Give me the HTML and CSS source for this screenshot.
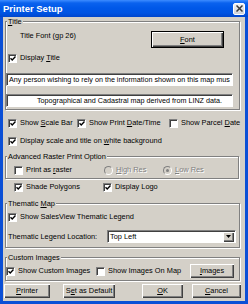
FILE: index.html
```html
<!DOCTYPE html>
<html>
<head>
<meta charset="utf-8">
<link rel="stylesheet" href="styles.css">
</head>
<body>
<div class="window">
  <div class="titlebar">
    <span class="title">Printer Setup</span>
    <span class="close"><svg width="7" height="7" viewBox="0 0 7 7"><path d="M0.5 0.5 L6.5 6.5 M6.5 0.5 L0.5 6.5" stroke="#3a3a3a" stroke-width="1.5"/></svg></span>
  </div>
  <div class="client">
    <fieldset class="group g-title">
      <legend><u>T</u>itle</legend>
      <div class="font-row">
        <span class="font-label">Title Font (gp 26)</span>
        <button class="btn btn-default btn-font"><span><u>F</u>ont</span></button>
      </div>
      <label class="chk display-title"><span class="box"><svg width="7" height="7" viewBox="0 0 7 7"><path d="M0.6 3.2 L2.6 5.2 L6.4 1.2" fill="none" stroke="#000" stroke-width="1.6"/></svg></span><span>Display <u>T</u>itle</span></label>
      <div class="field field1">Any person wishing to rely on the information shown on this map mus</div>
      <div class="field field2">Topographical and Cadastral map derived from LINZ data.</div>
    </fieldset>

    <div class="opt-row opt-row1">
      <label class="chk"><span class="box"><svg width="7" height="7" viewBox="0 0 7 7"><path d="M0.6 3.2 L2.6 5.2 L6.4 1.2" fill="none" stroke="#000" stroke-width="1.6"/></svg></span><span>Show <u>S</u>cale Bar</span></label>
      <label class="chk"><span class="box"><svg width="7" height="7" viewBox="0 0 7 7"><path d="M0.6 3.2 L2.6 5.2 L6.4 1.2" fill="none" stroke="#000" stroke-width="1.6"/></svg></span><span>Show Print <u>D</u>ate/Time</span></label>
      <label class="chk"><span class="box"></span><span>Show Parcel <u>D</u>ate</span></label>
    </div>
    <div class="opt-row opt-row2">
      <label class="chk"><span class="box"><svg width="7" height="7" viewBox="0 0 7 7"><path d="M0.6 3.2 L2.6 5.2 L6.4 1.2" fill="none" stroke="#000" stroke-width="1.6"/></svg></span><span>Display scale and title on <u>w</u>hite background</span></label>
    </div>

    <fieldset class="group g-adv">
      <legend>Advanced Raster Print Option</legend>
      <div class="adv-row">
        <label class="chk"><span class="box"></span><span>Print as <u>r</u>aster</span></label>
        <label class="radio disabled"><span class="dot"></span><span><u>H</u>igh Res</span></label>
        <label class="radio disabled"><span class="dot on"></span><span><u>L</u>ow Res</span></label>
      </div>
    </fieldset>

    <div class="opt-row shade-row">
      <label class="chk"><span class="box"><svg width="7" height="7" viewBox="0 0 7 7"><path d="M0.6 3.2 L2.6 5.2 L6.4 1.2" fill="none" stroke="#000" stroke-width="1.6"/></svg></span><span>Shade Polygons</span></label>
      <label class="chk"><span class="box"><svg width="7" height="7" viewBox="0 0 7 7"><path d="M0.6 3.2 L2.6 5.2 L6.4 1.2" fill="none" stroke="#000" stroke-width="1.6"/></svg></span><span>Display Logo</span></label>
    </div>

    <fieldset class="group g-them">
      <legend>Thematic <u>M</u>ap</legend>
      <label class="chk salesview"><span class="box"><svg width="7" height="7" viewBox="0 0 7 7"><path d="M0.6 3.2 L2.6 5.2 L6.4 1.2" fill="none" stroke="#000" stroke-width="1.6"/></svg></span><span>Show SalesView Thematic Legend</span></label>
      <div class="loc-row">
        <span class="loc-label">Thematic Legend Location:</span>
        <div class="combo">
          <span class="combo-text">Top Left</span>
          <span class="combo-btn"><svg width="5" height="3" viewBox="0 0 5 3"><path d="M0 0 H5 L2.5 3 Z" fill="#000"/></svg></span>
        </div>
      </div>
    </fieldset>

    <fieldset class="group g-custom">
      <legend>Custom Images</legend>
      <div class="custom-row">
        <label class="chk"><span class="box"><svg width="7" height="7" viewBox="0 0 7 7"><path d="M0.6 3.2 L2.6 5.2 L6.4 1.2" fill="none" stroke="#000" stroke-width="1.6"/></svg></span><span>Show Custom Images</span></label>
        <label class="chk"><span class="box"></span><span>Show Images On Map</span></label>
        <button class="btn btn-images"><span><u>I</u>mages</span></button>
      </div>
    </fieldset>

    <div class="bottom-row">
      <button class="btn btn-printer"><span><u>P</u>rinter</span></button>
      <button class="btn btn-setdef"><span>S<u>e</u>t as Default</span></button>
      <button class="btn btn-ok"><span><u>O</u>K</span></button>
      <button class="btn btn-cancel"><span><u>C</u>ancel</span></button>
    </div>
  </div>
</div>
</body>
</html>
```

FILE: styles.css
```css
* { box-sizing: border-box; }
html, body { margin: 0; padding: 0; }
body {
  width: 248px;
  height: 304px;
  overflow: hidden;
  background: #0b4fd6;
  font-family: "Liberation Sans", Arial, sans-serif;
  font-size: 7.4px;
  color: #000;
}
u { text-decoration: underline; text-underline-offset: 1px; }

.window {
  width: 248px;
  height: 304px;
  display: flex;
  flex-direction: column;
  background: #0b4fd6;
}

.titlebar {
  height: 17px;
  flex: none;
  display: flex;
  align-items: center;
  justify-content: space-between;
  padding: 0 3px 0 3px;
  background: linear-gradient(to bottom, #3d8cff 0, #0a62ee 3px, #0058e8 8px, #0054e3 13px, #0046cc 17px);
}
.title {
  color: #fff;
  font-weight: bold;
  font-size: 9.5px;
  line-height: 11px;
}
.close {
  width: 12px;
  height: 12px;
  border: 1px solid #fff;
  border-radius: 2px;
  background: linear-gradient(#f2f2f2, #cfd3da);
  display: flex;
  align-items: center;
  justify-content: center;
}

.client {
  flex: 1;
  margin: 0 3px 3px 3px;
  background: #d4d0c8;
  display: flex;
  flex-direction: column;
  align-items: flex-start;
}

/* group boxes */
.group {
  margin: 0 0 0 2px;
  padding: 0;
  min-width: 0;
  border: 1px solid #808080;
  box-shadow: inset 1px 1px #fff, 1px 1px #fff;
}
.group legend {
  margin-left: 1px;
  padding: 0 1px;
  line-height: 9px;
  background: #d4d0c8;
  white-space: nowrap;
}

.g-title { width: 235px; padding-bottom: 2px; }
.font-row {
  display: flex;
  align-items: flex-start;
  height: 17px;
  margin-top: 5px;
}
.font-label { margin-left: 14px; line-height: 10px; }
.btn-font { margin-left: auto; margin-right: 15px; width: 73px; height: 17px; }
.display-title { margin-top: 5px; margin-left: 2px; }
.field {
  width: 227px;
  height: 13px;
  background: #fff;
  border: 1px solid;
  border-color: #808080 #fff #fff #808080;
  box-shadow: inset 1px 1px #404040;
  font-size: 7.2px;
  line-height: 11px;
  white-space: nowrap;
  overflow: hidden;
}
.field1 { margin-top: 10px; padding-left: 2px; }
.field2 { margin-top: 8px; padding-left: 30px; }

/* checkbox */
.chk {
  display: flex;
  align-items: center;
  gap: 3px;
  height: 10px;
  line-height: 10px;
  white-space: nowrap;
}
.box {
  flex: none;
  width: 9px;
  height: 9px;
  background: #fff;
  border: 1px solid;
  border-color: #808080 #fff #fff #808080;
  box-shadow: inset 1px 1px #404040;
  display: flex;
  align-items: center;
  justify-content: center;
  padding: 1px 0 0 1px;
}

/* radio */
.radio {
  display: flex;
  align-items: center;
  gap: 3px;
  height: 10px;
  line-height: 10px;
  white-space: nowrap;
}
.dot {
  flex: none;
  width: 9px;
  height: 9px;
  border-radius: 50%;
  border: 1px solid;
  border-color: #808080 #fff #fff #808080;
  background: #d4d0c8;
  display: flex;
  align-items: center;
  justify-content: center;
}
.dot.on::after {
  content: "";
  width: 3px;
  height: 3px;
  border-radius: 50%;
  background: #808080;
}
.disabled { color: #808080; text-shadow: 1px 1px #fff; }

.opt-row { display: grid; margin-left: 5px; height: 10px; }
.opt-row1 { margin-top: 8px; grid-template-columns: 69px 92px auto; }
.opt-row2 { margin-top: 8px; }

.g-adv { width: 234px; margin-top: 6px; padding-bottom: 3px; }
.adv-row {
  display: grid;
  grid-template-columns: 90px 59px auto;
  margin-top: 4px;
  margin-left: 8px;
}

.shade-row { margin-top: 3px; margin-left: 11px; grid-template-columns: 89px auto; }

.g-them { width: 235px; margin-top: 7px; padding-bottom: 4px; }
.salesview { margin-top: 4px; margin-left: 2px; }
.loc-row {
  display: flex;
  align-items: center;
  margin-top: 8px;
  margin-left: 2px;
}
.loc-label { width: 99px; }
.combo {
  width: 129px;
  height: 13px;
  background: #fff;
  border: 1px solid;
  border-color: #808080 #fff #fff #808080;
  box-shadow: inset 1px 1px #404040;
  display: flex;
  align-items: center;
  justify-content: space-between;
  padding: 1px 1px 0 2px;
}
.combo-text { line-height: 10px; }
.combo-btn {
  width: 11px;
  height: 10px;
  background: #d4d0c8;
  box-shadow: inset 1px 1px #fff, inset -1px -1px #404040, inset -2px -2px #808080;
  display: flex;
  align-items: center;
  justify-content: center;
  margin-top: -1px;
}

.g-custom { width: 235px; margin-top: 5px; padding-bottom: 2px; }
.custom-row {
  display: flex;
  align-items: center;
  height: 14px;
  margin-top: 2px;
}
.custom-row .chk:first-child { width: 90px; }
.btn-images { margin-left: auto; margin-right: 5px; width: 44px; height: 14px; }

/* buttons */
.btn {
  font: inherit;
  color: #000;
  padding: 0;
  border: none;
  background: #d4d0c8;
  box-shadow: inset 1px 1px #fff, inset -1px -1px #404040, inset -2px -2px #808080;
  display: flex;
  align-items: center;
  justify-content: center;
  line-height: 10px;
  flex: none;
}
.btn-default {
  border: 1px solid #000;
}

.bottom-row {
  display: flex;
  align-items: center;
  margin-top: 3px;
  margin-left: 1px;
  height: 14px;
}
.bottom-row .btn { height: 14px; }
.btn-printer { width: 46px; }
.btn-setdef { width: 52px; margin-left: 13px; }
.btn-ok { width: 41px; margin-left: 27px; }
.btn-cancel { width: 49px; margin-left: 9px; }
```
